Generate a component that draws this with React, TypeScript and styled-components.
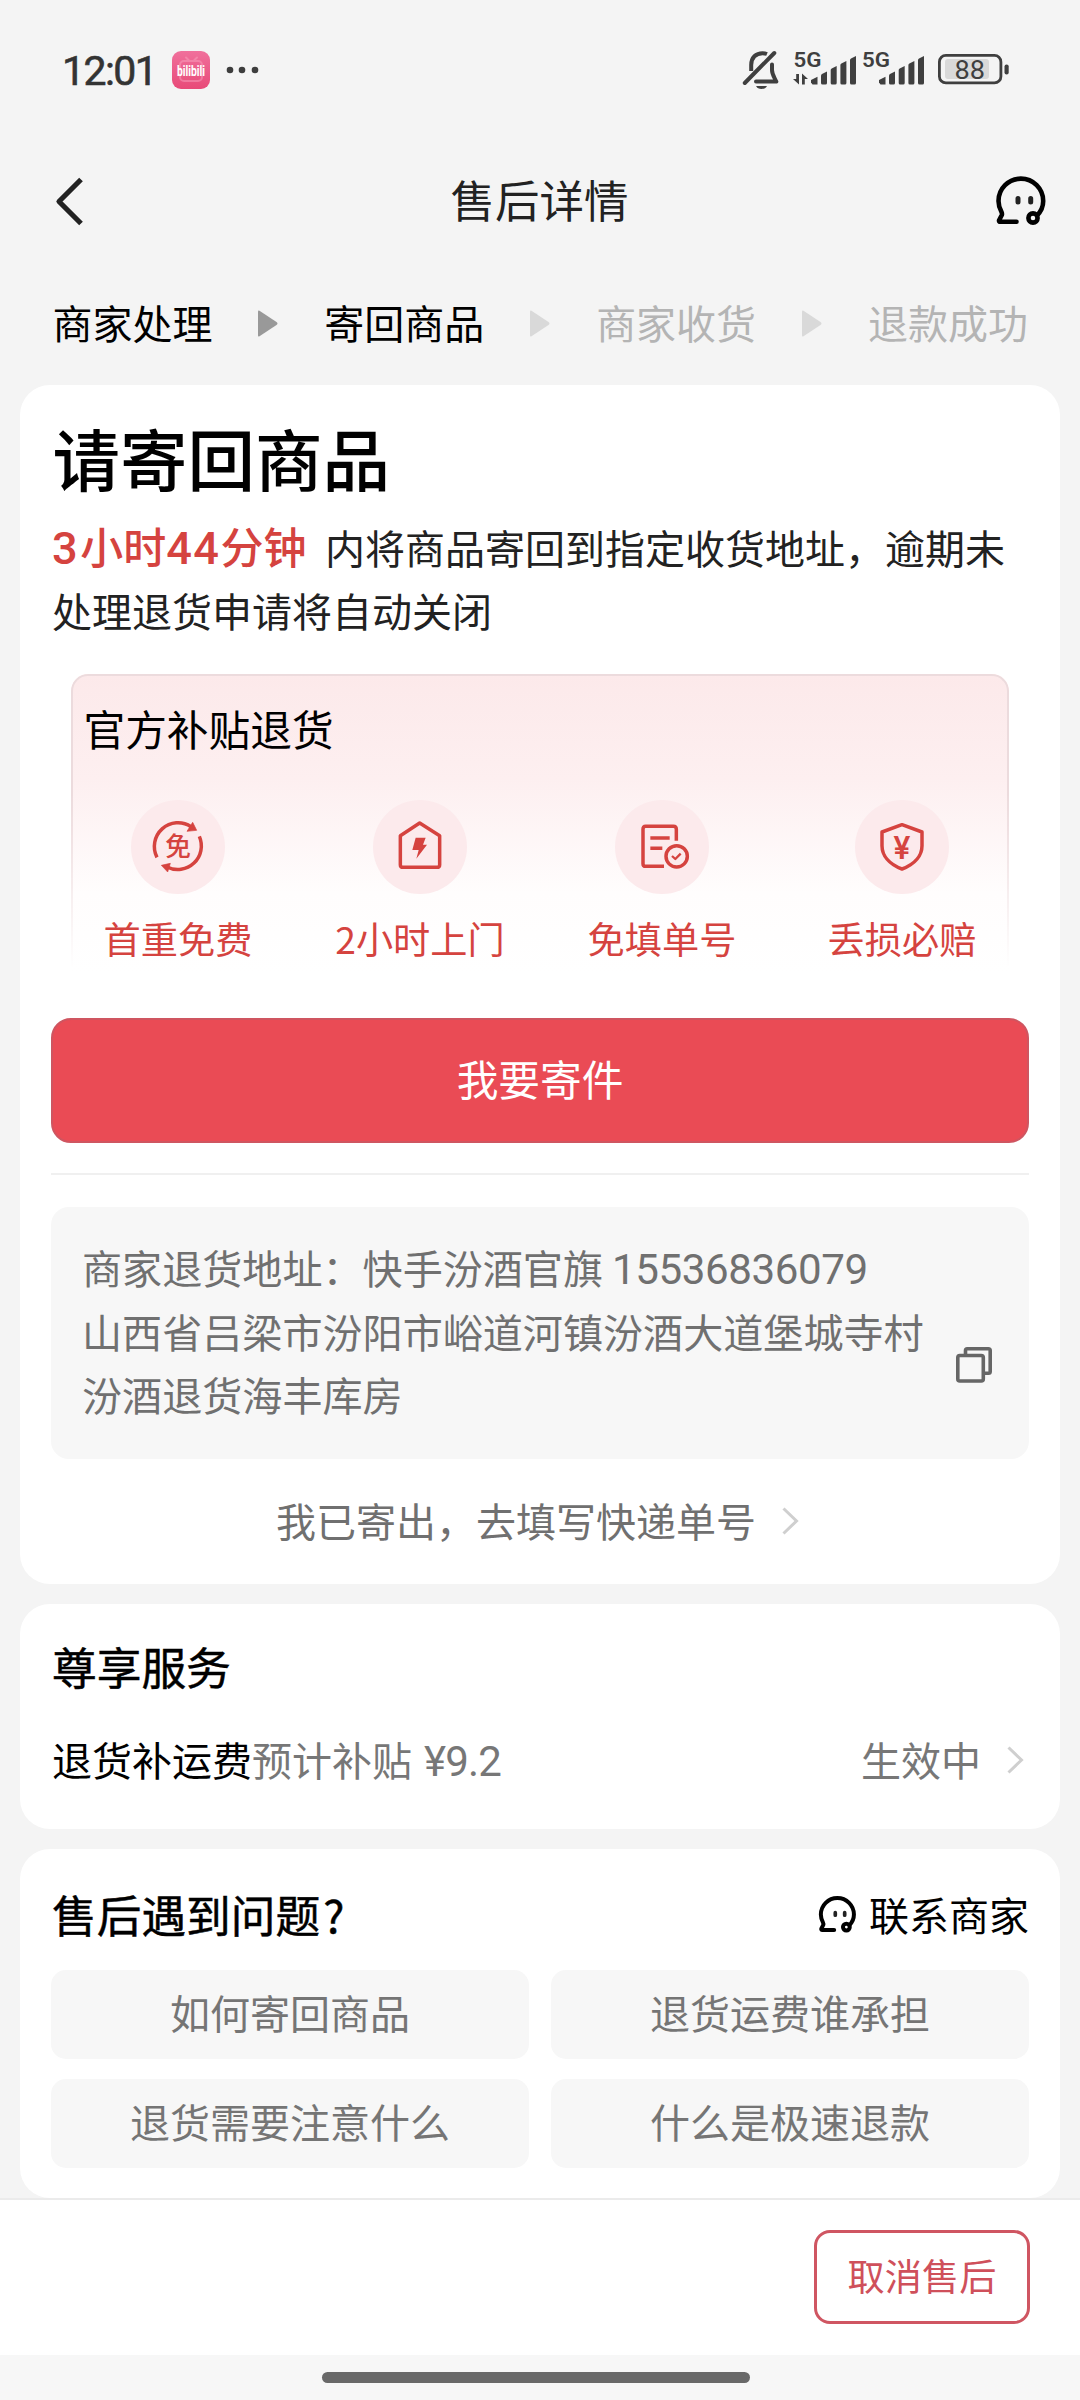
import React from "react";
import styled, { createGlobalStyle } from "styled-components";

const GlobalStyle = createGlobalStyle`
  html, body { margin: 0; padding: 0; background: #f4f4f4; }
  * { box-sizing: border-box; }
  button { font: inherit; border: 0; padding: 0; margin: 0; background: none; color: inherit; }
  h1, h2, p { margin: 0; font-weight: inherit; }
  svg { display: block; flex: none; overflow: visible; }
`;

const RED = "#d5433f";

const Screen = styled.div`
  width: 1080px;
  height: 2400px;
  display: flex;
  flex-direction: column;
  overflow: hidden;
  background: #f4f4f4;
  color: #000;
  font-family: "Noto Sans CJK SC", sans-serif;
  font-size: 40px;
  line-height: 60px;
  white-space: nowrap;
`;

const Num = styled.span<{ $spacing?: number }>`
  font-family: Roboto, "Noto Sans CJK SC", sans-serif;
  font-size: 1.05em;
  line-height: 0;
  letter-spacing: ${(p) => p.$spacing ?? -0.4}px;
`;

/* ---------- status bar ---------- */
const StatusBar = styled.header`
  height: 140px;
  padding: 0 70px 0 62px;
  display: flex;
  align-items: center;
  justify-content: space-between;
`;
const StatusSide = styled.div`
  display: flex;
  align-items: center;
`;
const Clock = styled.span`
  width: 110px;
  padding-top: 2px;
  font: 400 41px/60px Roboto, sans-serif;
  letter-spacing: -1.6px;
  color: #333;
  -webkit-text-stroke: 0.6px #333;
`;

/* ---------- navigation bar ---------- */
const NavBar = styled.nav`
  height: 122px;
  padding: 0 34px 0 54px;
  display: grid;
  grid-template-columns: 50px 1fr 50px;
  align-items: center;
`;
const NavTitle = styled.h1`
  margin-left: -21px;
  text-align: center;
  font-size: 44.5px;
  line-height: 60px;
  color: #222;
  padding-bottom: 5px;
`;

/* ---------- progress steps ---------- */
const Steps = styled.div`
  height: 123px;
  padding: 0 52px 1px 52.5px;
  display: flex;
  align-items: center;
  justify-content: space-between;
`;
const Step = styled.span<{ $active: boolean }>`
  padding-bottom: 3px;
  color: ${(p) => (p.$active ? "#000" : "#b4b4b4")};
`;

/* ---------- cards ---------- */
const Cards = styled.main`
  flex: 1;
  display: flex;
  flex-direction: column;
  gap: 20px;
  padding: 0 20px;
`;
const Card = styled.section<{ $height: number }>`
  height: ${(p) => p.$height}px;
  padding: 0 31px;
  border-radius: 30px;
  background: #fff;
  display: flex;
  flex-direction: column;
`;
const MainTitle = styled.h2`
  margin: 30px 0 0 1.5px;
  font-size: 67.5px;
  line-height: 84px;
  font-weight: 500;
`;
const Notice = styled.p`
  margin: 17px 0 0 1px;
  line-height: 63px;
  color: #222;
`;
const Countdown = styled.span`
  display: inline-block;
  width: 273px;
  font-size: 43px;
  line-height: 40px;
  font-weight: 500;
  color: ${RED};
`;

const Promo = styled.div`
  position: relative;
  height: 300px;
  margin: 32px 20px 0 20px;
  padding: 26px 0 0 0;
  border-radius: 17px 17px 0 0;
  background: linear-gradient(#fce9ea 0, #fdeff0 35%, #fffdfd 73%, #fff 100%);

  &::before {
    content: "";
    position: absolute;
    inset: 0;
    border: 2px solid #ecdbdd;
    border-bottom: 0;
    border-radius: inherit;
    mask-image: linear-gradient(#000 40%, transparent 98%);
  }
`;
const PromoTitle = styled.h2`
  margin-left: 12.5px;
  font-size: 41.7px;
  line-height: 56px;
`;
const Perks = styled.div`
  display: grid;
  grid-template-columns: 240px 244px 240px 240px;
  margin: 44px -15px 0 -13px;
`;
const Perk = styled.div`
  display: flex;
  flex-direction: column;
  align-items: center;
  gap: 16px;
  font-size: 37.2px;
  line-height: 56px;
  color: ${RED};
`;
const PerkBadge = styled.div`
  width: 94px;
  height: 94px;
  border-radius: 50%;
  background: #fceaec;
`;

const SendButton = styled.button`
  flex: none;
  height: 125px;
  margin-top: 44px;
  padding-bottom: 5px;
  border: 2px solid #cf5560;
  border-radius: 20px;
  background: #ea4b55;
  color: #fff;
  font-size: 41.7px;
`;
const Divider = styled.div`
  height: 2px;
  margin: 30px 0 32px;
  background: #f0f0f0;
`;
const AddressBox = styled.div`
  height: 252px;
  border-radius: 18px;
  background: #f7f7f7;
  padding: 0 37px 0 31px;
  display: flex;
  align-items: center;
  justify-content: space-between;
`;
const Address = styled.p`
  padding-bottom: 5px;
  font-size: 40.1px;
  line-height: 63.5px;
  color: #707070;
`;
const CopySlot = styled.div`
  padding-top: 63px;
`;
const TrackingLink = styled.button`
  height: 125px;
  padding: 0 5px 4px 0;
  display: flex;
  align-items: center;
  justify-content: center;
  gap: 26px;
  font-size: 40px;
  color: #707070;
`;

const CardTitle = styled.h2`
  font-size: 44.7px;
  line-height: 60px;
  -webkit-text-stroke: 0.5px #000;
`;
const ServiceHeader = styled.div`
  padding: 32px 0 0 1px;
`;
const ServiceRow = styled.div`
  margin-top: 33px;
  padding: 0 5px 0 1px;
  display: flex;
  align-items: center;
  justify-content: space-between;
`;
const Muted = styled.span`
  color: #777;
`;
const Amount = styled(Num)`
  margin-left: 3px;
`;
const ServiceStatus = styled.span`
  display: flex;
  align-items: center;
  gap: 26px;
  color: #777;
`;

const HelpHeader = styled.div`
  height: 95px;
  padding: 35px 0 0 1px;
  display: flex;
  align-items: center;
  justify-content: space-between;
`;
const QuestionMark = styled.span`
  margin-left: 3px;
`;
const Contact = styled.button`
  display: flex;
  align-items: center;
  gap: 13px;
`;
const QuestionGrid = styled.div`
  margin-top: 26px;
  display: grid;
  grid-template-columns: 1fr 1fr;
  gap: 20px 22px;
`;
const Question = styled.button`
  height: 89px;
  padding-bottom: 5px;
  border-radius: 15px;
  background: #f7f7f7;
  color: #757575;
`;

/* ---------- footer ---------- */
const Footer = styled.footer`
  height: 157px;
  border-top: 2px solid #ebebeb;
  background: #fff;
  padding: 30px 50px 0;
  display: flex;
  justify-content: flex-end;
`;
const CancelButton = styled.button`
  width: 216px;
  height: 94px;
  padding-bottom: 4px;
  border: 3px solid #cf5662;
  border-radius: 16px;
  color: #cf505b;
  font-size: 37.2px;
`;
const HomeArea = styled.div`
  height: 45px;
  background: #f7f7f7;
  display: flex;
  justify-content: center;
  padding: 17px 8px 0 0;
`;
const HomeBar = styled.div`
  width: 428px;
  height: 11px;
  border-radius: 6px;
  background: #696969;
`;

/* ---------- drawings ---------- */
const AppBadge = () => (
  <svg width="38" height="38" viewBox="0 0 38 38">
    <defs>
      <linearGradient id="pink" x1="0" y1="0" x2="0" y2="1">
        <stop offset="0" stopColor="#f0709c" />
        <stop offset="1" stopColor="#e84a78" />
      </linearGradient>
    </defs>
    <rect width="38" height="38" rx="9" fill="url(#pink)" />
    <g stroke="#f8a0bd" strokeWidth="2" fill="none" strokeLinecap="round" opacity=".5">
      <rect x="8" y="10" width="22" height="20" rx="4" />
      <path d="M14 6.5l3 3M25 6.5l-3 3" />
    </g>
    <text x="5" y="25" textLength="28" lengthAdjust="spacingAndGlyphs" fontFamily="Roboto" fontWeight="700" fontSize="15.5" fill="#fff">
      bilibili
    </text>
  </svg>
);

const Dots = () => (
  <svg width="48" height="10" viewBox="0 0 48 10" fill="#3d3d3d">
    <circle cx="20" cy="5" r="3.3" />
    <circle cx="32" cy="5" r="3.3" />
    <circle cx="45" cy="5" r="3.3" />
  </svg>
);

const StatusIcons = () => (
  <svg width="268" height="60" viewBox="742 40 268 60" fill="#3f3f3f">
    <g fill="none" stroke="#3f3f3f" strokeWidth="4" strokeLinejoin="round" strokeLinecap="round">
      <path d="M744.8 83L774.3 53" />
      <path d="M751.2 71V65C751.2 57.5 756 53.2 762.5 53.2C764 53.2 765.5 53.4 767 54" strokeLinecap="butt" />
      <path d="M772 64.5V70C772 74.5 774.5 77.5 776.3 81.6H756" />
    </g>
    <path d="M756 86h11c-1 2-3 3-5.500 3s-4.500-1-5.500-3z" />
    <g fontFamily="Roboto" fontWeight="600" fontSize="21">
      <text x="793.500" y="67" textLength="28" lengthAdjust="spacingAndGlyphs">5G</text>
      <text x="862" y="67" textLength="28" lengthAdjust="spacingAndGlyphs">5G</text>
    </g>
    <path d="M796.200 74h2.800v10.500l-6-5.500h3.200zM802 84.500h2.800V79h3.200l-6-5.500z" />
    {[811, 879].map((x) => (
      <g key={x}>
        <path d={`M${x} 82.500V80l6.500-3.200V84.500h-5z`} />
        <path d={`M${x + 10} 83V75.500q0-1 1-1.500l5-2.500V83q0 1.500-1.500 1.500h-3q-1.500 0-1.500-1.500z`} />
        <path d={`M${x + 19.700} 83V70q0-1 1-1.500l5-2.500V83q0 1.500-1.500 1.500h-3q-1.500 0-1.500-1.500z`} />
        <path d={`M${x + 29.400} 83V65q0-1 1-1.500l5-2.500V83q0 1.500-1.500 1.500h-3q-1.500 0-1.500-1.500z`} />
        <path d={`M${x + 39} 83V60q0-1 1-1.500l5-2.500V83q0 1.500-1.500 1.500h-3q-1.500 0-1.500-1.500z`} />
      </g>
    ))}
    <rect x="939.400" y="55.400" width="61.500" height="27.500" rx="6.500" fill="none" stroke="#3f3f3f" strokeWidth="2.800" />
    <rect x="945" y="59" width="44" height="20" rx="3" fill="#d9d9d9" />
    <rect x="1004.500" y="64.500" width="4.200" height="10" rx="2" />
    <text x="954.500" y="78.500" textLength="30.500" lengthAdjust="spacingAndGlyphs" fontFamily="Roboto" fontWeight="400" fontSize="25">88</text>
  </svg>
);

const BackIcon = () => (
  <svg width="30" height="48" viewBox="0 0 30 48" fill="none" stroke="#222" strokeWidth="5.200">
    <path d="M27 2.500L5 24.500L27 46.500" strokeLinejoin="round" />
  </svg>
);

const ServiceIcon = ({ size, stroke }: { size: number; stroke: number }) => (
  <svg width={size} height={size} viewBox="0 0 50 50" fill="none" stroke="#000" strokeWidth={stroke} strokeLinecap="round" strokeLinejoin="round">
    <path d="M20.500 45.800H4.500Q2.600 45.800 3.100 44.200L5.800 39Q6.300 37.500 5.300 35.500C3.500 32 2.500 29 2.500 25A22.300 22.300 0 0 1 47.200 25C47.200 30.500 45.500 35 41 39.500" />
    <circle cx="37" cy="42" r="4.600" />
    <path d="M22 22.500v3.500M34.700 22.500v3.500" stroke="#222" strokeWidth="5" />
  </svg>
);

const StepArrow = ({ color }: { color: string }) => (
  <svg width="20" height="27" viewBox="0 0 20 27" fill={color}>
    <path d="M0 1.500Q0 0 1.500 .8L18.500 12Q20.500 13.500 18.500 15L1.500 26.200Q0 27 0 25.500z" />
  </svg>
);

const ChevronRight = () => (
  <svg width="17" height="28" viewBox="0 0 17 28" fill="none" stroke="#cfcfcf" strokeWidth="3">
    <path d="M1.500 2.500L14.500 15L1.500 27.500" />
  </svg>
);

const CopyIcon = () => (
  <svg width="36" height="36" viewBox="0 0 36 36" fill="none" stroke="#666" strokeWidth="3.600" strokeLinejoin="round">
    <rect x="1.800" y="8.500" width="25.500" height="25.500" rx="2" />
    <path d="M9.500 8V3.500Q9.500 1.800 11.200 1.800H32.300Q34.200 1.800 34.200 3.500V24.500Q34.200 26.200 32.500 26.200H28" />
  </svg>
);

const perkArt: Record<string, React.ReactNode> = {
  free: (
    <>
      <path d="M78 172A71 71 0 0 1 180 80" />
      <path d="M205 109A71 71 0 0 1 108 201" />
      <path d="M185 67L197 91L168 94z" fill={RED} strokeWidth="2" />
      <path d="M91 196L118 190L110 216z" fill={RED} strokeWidth="2" />
      <text x="141" y="168" textAnchor="middle" fontSize="77" fontWeight="500" fill={RED} stroke="none">免</text>
    </>
  ),
  pickup: (
    <>
      <path d="M140 69L200 107V194Q200 202 192 202H90Q82 202 82 194V107z" />
      <path d="M128 113H158L150 134H162L130 176L137 150H118z" fill={RED} stroke="none" />
    </>
  ),
  noForm: (
    <>
      <path d="M147 199H92Q84 199 84 191V88Q84 79 92 79H175Q184 79 184 88V122" />
      <path d="M106 114H164M106 145H142" />
      <circle cx="185" cy="169" r="32" />
      <path d="M171 168L181 177L197 161" strokeWidth="7" />
    </>
  ),
  insured: (
    <>
      <path d="M141 74L201 96V137C201 166 180 192 141 207C102 192 81 166 81 137V96z" />
      <text x="141" y="176" textAnchor="middle" fontFamily="Inter" fontSize="92" fontWeight="600" fill={RED} stroke="none">¥</text>
    </>
  ),
};

const PerkIcon = ({ art }: { art: string }) => (
  <PerkBadge>
    <svg width="94" height="94" viewBox="0 0 282 282" fill="none" stroke={RED} strokeWidth="10.500" strokeLinejoin="round">
      {perkArt[art]}
    </svg>
  </PerkBadge>
);

const perks = [
  { art: "free", label: "首重免费" },
  { art: "pickup", label: "2小时上门" },
  { art: "noForm", label: "免填单号" },
  { art: "insured", label: "丢损必赔" },
];
const steps = ["商家处理", "寄回商品", "商家收货", "退款成功"];
const questions = ["如何寄回商品", "退货运费谁承担", "退货需要注意什么", "什么是极速退款"];

export default function App() {
  return (
    <Screen>
      <GlobalStyle />
      <StatusBar>
        <StatusSide>
          <Clock>12:01</Clock>
          <AppBadge />
          <Dots />
        </StatusSide>
        <StatusIcons />
      </StatusBar>
      <NavBar>
        <BackIcon />
        <NavTitle>售后详情</NavTitle>
        <ServiceIcon size={50} stroke={4.6} />
      </NavBar>
      <Steps>
        {steps.map((label, i) => (
          <React.Fragment key={label}>
            {i > 0 && <StepArrow color={i === 1 ? "#999" : "#d9d9d9"} />}
            <Step $active={i < 2}>{label}</Step>
          </React.Fragment>
        ))}
      </Steps>
      <Cards>
        <Card $height={1199}>
          <MainTitle>请寄回商品</MainTitle>
          <Notice>
            <Countdown>
              <Num $spacing={2.5}>3</Num>小时<Num $spacing={1.5}>44</Num>分钟
            </Countdown>
            内将商品寄回到指定收货地址，逾期未
            <br />
            处理退货申请将自动关闭
          </Notice>
          <Promo>
            <PromoTitle>官方补贴退货</PromoTitle>
            <Perks>
              {perks.map((p) => (
                <Perk key={p.art}>
                  <PerkIcon art={p.art} />
                  <span>{p.label}</span>
                </Perk>
              ))}
            </Perks>
          </Promo>
          <SendButton>我要寄件</SendButton>
          <Divider />
          <AddressBox>
            <Address>
              商家退货地址：快手汾酒官旗 <Num>15536836079</Num>
              <br />
              山西省吕梁市汾阳市峪道河镇汾酒大道堡城寺村
              <br />
              汾酒退货海丰库房
            </Address>
            <CopySlot>
              <CopyIcon />
            </CopySlot>
          </AddressBox>
          <TrackingLink>
            我已寄出，去填写快递单号
            <ChevronRight />
          </TrackingLink>
        </Card>
        <Card $height={225}>
          <ServiceHeader>
            <CardTitle>尊享服务</CardTitle>
          </ServiceHeader>
          <ServiceRow>
            <span>
              退货补运费<Muted>预计补贴 <Amount $spacing={-0.8}>¥9.2</Amount></Muted>
            </span>
            <ServiceStatus>
              生效中
              <ChevronRight />
            </ServiceStatus>
          </ServiceRow>
        </Card>
        <Card $height={349}>
          <HelpHeader>
            <CardTitle>
              售后遇到问题<QuestionMark>?</QuestionMark>
            </CardTitle>
            <Contact>
              <ServiceIcon size={37} stroke={5.4} />
              <span>联系商家</span>
            </Contact>
          </HelpHeader>
          <QuestionGrid>
            {questions.map((q) => (
              <Question key={q}>{q}</Question>
            ))}
          </QuestionGrid>
        </Card>
      </Cards>
      <Footer>
        <CancelButton>取消售后</CancelButton>
      </Footer>
      <HomeArea>
        <HomeBar />
      </HomeArea>
    </Screen>
  );
}
